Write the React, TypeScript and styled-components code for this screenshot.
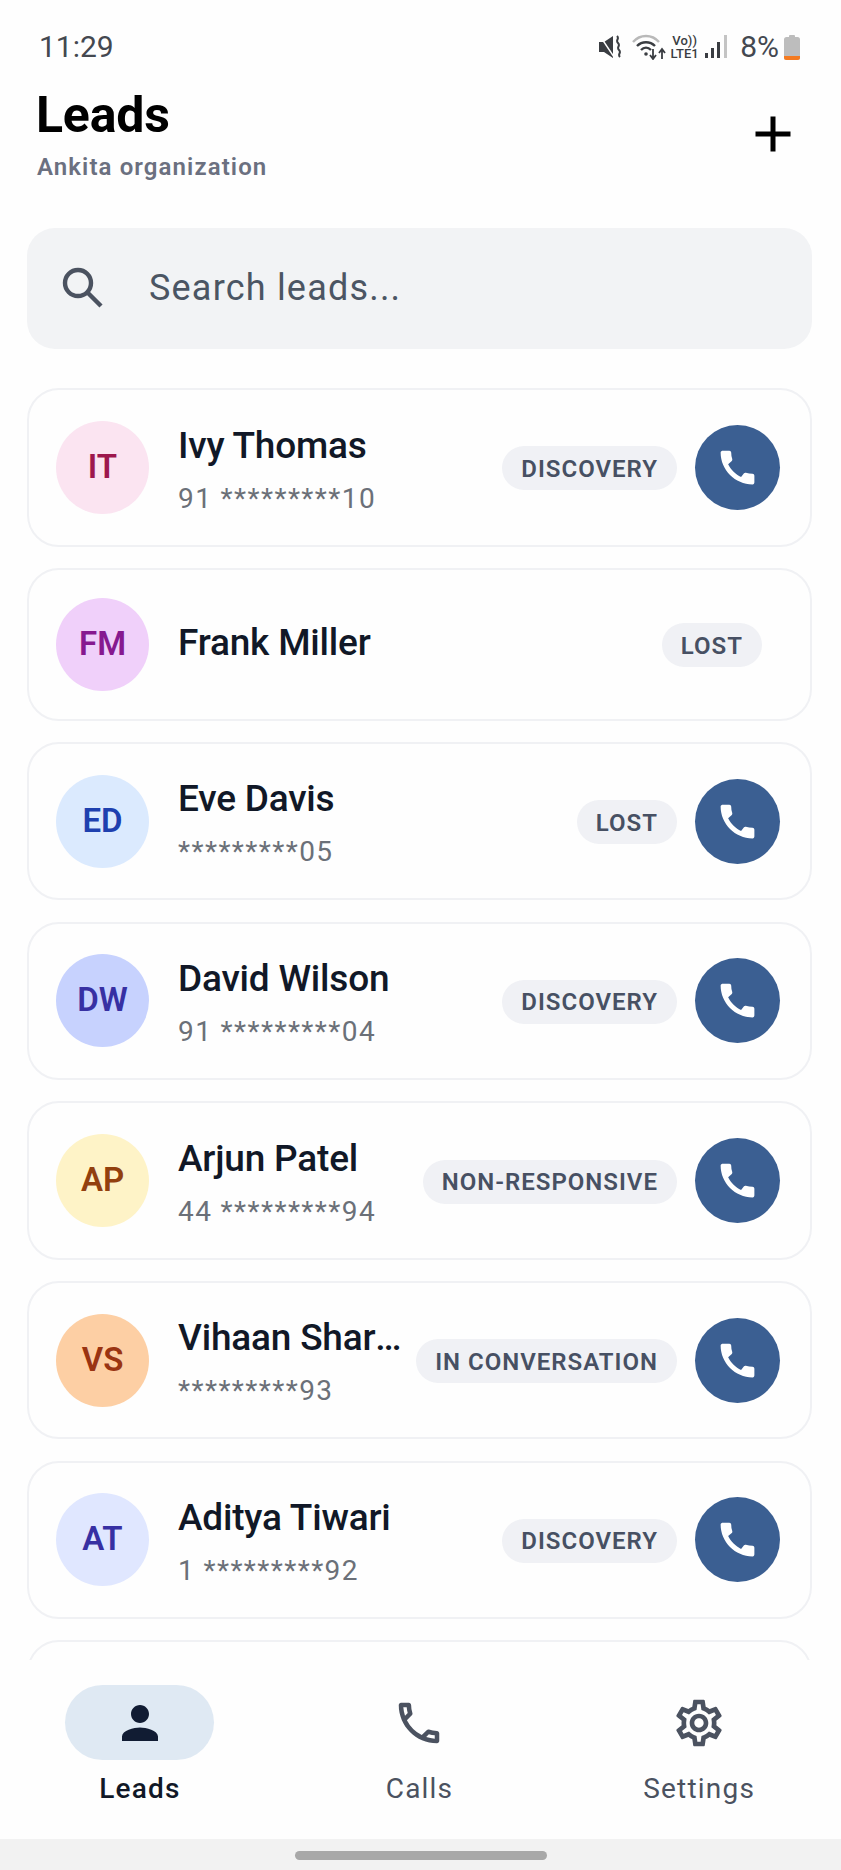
import React from 'react'
import styled, { createGlobalStyle } from 'styled-components'
import { MdAdd, MdCall, MdPerson, MdOutlineCall, MdOutlineSettings } from 'react-icons/md'

const GlobalStyle = createGlobalStyle`
    html, body {
        margin: 0;
        padding: 0;
        background: #fefefe;
        font-family: Roboto, "Liberation Sans", sans-serif;
    }
    * {
        box-sizing: border-box;
    }
`

const Page = styled.div`
    width: 841px;
    height: 1870px;
    display: flex;
    flex-direction: column;
    overflow: hidden;
    background: #fefefe;
`

const StatusBar = styled.div`
    height: 80px;
    flex: none;
    padding: 30px 41px 0 39px;
    display: flex;
    justify-content: space-between;
    align-items: flex-start;
    color: #444850;
    font-size: 30px;
    line-height: 34px;
`

const StatusIcons = styled.div`
    display: flex;
    align-items: center;
    height: 34px;
`

const StatusGlyph = styled.svg<{ $left: number }>`
    display: block;
    flex: none;
    margin-left: ${(p) => p.$left}px;
`

const VoLte = styled.div`
    margin-left: 3px;
    width: 31px;
    display: flex;
    flex-direction: column;
    align-items: center;
    font-size: 13px;
    line-height: 13px;
    font-weight: 500;
    color: #3a3d42;
`

const BatteryPercent = styled.span`
    margin-left: 12px;
`

const Header = styled.header`
    flex: none;
    height: 148px;
    padding: 7px 36px 0 36px;
    display: flex;
    justify-content: space-between;
    align-items: flex-start;
`

const Title = styled.h1`
    margin: 0;
    font-size: 50px;
    line-height: 56px;
    font-weight: 700;
    letter-spacing: -0.2px;
    color: #000;
`

const Subtitle = styled.div`
    font-size: 24px;
    line-height: 30px;
    margin-top: 9px;
    margin-left: 1px;
    font-weight: 600;
    letter-spacing: 1.1px;
    color: #6b7080;
`

const AddButton = styled.div`
    margin-top: 17px;
    margin-right: 2px;
    color: #000;
    line-height: 0;
`

const SearchBar = styled.div`
    flex: none;
    height: 121px;
    margin: 0 29px 0 27px;
    padding: 0 0 2px 35px;
    border-radius: 28px;
    background: #f2f3f5;
    display: flex;
    align-items: center;
    color: #4b5563;
    font-size: 36px;
    letter-spacing: 1.2px;
`

const SearchGlyph = styled.svg`
    display: block;
    flex: none;
    margin-right: 46px;
    color: #4b5260;
`

const LeadList = styled.div`
    flex: 1;
    min-height: 0;
    overflow: hidden;
    padding: 39px 29px 0 27px;
    display: flex;
    flex-direction: column;
    gap: 21.2px;
`

const Card = styled.div`
    flex: none;
    padding: 28px 30px 28px 27px;
    border: 2px solid #f0f1f4;
    border-radius: 32px;
    background: #fefefe;
    display: flex;
    align-items: center;
`

const EmptyCard = styled(Card)`
    height: 159px;
`

const Avatar = styled.div<{ $bg: string; $fg: string }>`
    width: 93px;
    height: 93px;
    flex: none;
    border-radius: 50%;
    background: ${(p) => p.$bg};
    color: ${(p) => p.$fg};
    display: flex;
    align-items: center;
    justify-content: center;
    font-size: 33px;
    font-weight: 600;
    padding-bottom: 2px;
`

const LeadText = styled.div`
    flex: 1;
    min-width: 0;
    margin-left: 29px;
    margin-right: 10px;
`

const Name = styled.div<{ $solo?: boolean }>`
    margin: ${(p) => (p.$solo ? '0 0 2px' : '2.5px 0 0')};
    font-size: 37px;
    line-height: 50px;
    font-weight: 500;
    letter-spacing: -0.2px;
    color: #111827;
    white-space: nowrap;
    overflow: hidden;
    text-overflow: ellipsis;
`

const Phone = styled.div`
    margin-top: 9px;
    font-size: 28px;
    line-height: 37px;
    letter-spacing: 1.4px;
    color: #6b7078;
`

const Badge = styled.div<{ $solo?: boolean }>`
    flex: none;
    height: 44px;
    margin-top: 2px;
    padding: 1px 19px 0;
    border-radius: 22px;
    background: #f0f1f5;
    color: #475063;
    display: flex;
    align-items: center;
    font-size: 24px;
    font-weight: 600;
    letter-spacing: 1px;
    margin-right: ${(p) => (p.$solo ? '18px' : '0')};
`

const CallButton = styled.div`
    width: 85px;
    height: 85px;
    flex: none;
    margin-left: 18px;
    border-radius: 50%;
    background: #3b5f92;
    color: #fff;
    display: flex;
    align-items: center;
    justify-content: center;
    line-height: 0;
`

const BottomNav = styled.nav`
    flex: none;
    height: 179px;
    padding: 25px 2px 0 0;
    background: #fefefe;
    display: grid;
    grid-template-columns: repeat(3, 1fr);
`

const NavItem = styled.div<{ $active?: boolean }>`
    display: flex;
    flex-direction: column;
    align-items: center;
    color: ${(p) => (p.$active ? '#111827' : '#4b5260')};
    font-size: 28px;
    line-height: 36px;
    letter-spacing: 1.2px;
    font-weight: ${(p) => (p.$active ? 500 : 400)};
`

const NavIcon = styled.div<{ $active?: boolean }>`
    width: 149px;
    height: 75px;
    border-radius: 38px;
    margin-bottom: 11px;
    background: ${(p) => (p.$active ? '#dfe9f3' : 'transparent')};
    display: flex;
    align-items: center;
    justify-content: center;
    line-height: 0;
`

const SystemBar = styled.div`
    flex: none;
    height: 31px;
    background: #f2f2f2;
    display: flex;
    justify-content: center;
    padding-top: 12px;
`

const HomeHandle = styled.div`
    width: 252px;
    height: 9px;
    border-radius: 5px;
    background: #a8a8a8;
`

type Lead = {
    initials: string
    name: string
    phone?: string
    status: string
    bg: string
    fg: string
}

const leads: Lead[] = [
    { initials: 'IT', name: 'Ivy Thomas', phone: '91 *********10', status: 'DISCOVERY', bg: '#fbe4f1', fg: '#9d174d' },
    { initials: 'FM', name: 'Frank Miller', status: 'LOST', bg: '#f0d0fa', fg: '#86198f' },
    { initials: 'ED', name: 'Eve Davis', phone: '*********05', status: 'LOST', bg: '#dbeafe', fg: '#1e40af' },
    { initials: 'DW', name: 'David Wilson', phone: '91 *********04', status: 'DISCOVERY', bg: '#c7d2fe', fg: '#3730a3' },
    { initials: 'AP', name: 'Arjun Patel', phone: '44 *********94', status: 'NON-RESPONSIVE', bg: '#fef3c7', fg: '#92400e' },
    { initials: 'VS', name: 'Vihaan Sharma', phone: '*********93', status: 'IN CONVERSATION', bg: '#fdcfa4', fg: '#9a3412' },
    { initials: 'AT', name: 'Aditya Tiwari', phone: '1 *********92', status: 'DISCOVERY', bg: '#e0e7ff', fg: '#3730a3' },
]

const MuteIcon = () => (
    <StatusGlyph $left={0} width="22" height="24" viewBox="0 0 22 24" fill="none">
        <path d="M0 7h5l9-6v22l-9-6H0z" fill="#3a3d42" />
        <path d="M1 1l14 21" stroke="#fefefe" strokeWidth="1.4" />
        <path d="M18 1c3 3-2 4 1 7s-2 4 1 7-2 4 1 7" stroke="#3a3d42" strokeWidth="2" />
    </StatusGlyph>
)

const WifiIcon = () => (
    <StatusGlyph $left={11} width="34" height="26" viewBox="0 0 34 26" fill="none">
        <path d="M1 8c7-8 19-8 26 0" stroke="#b9b9b9" strokeWidth="2.4" />
        <path d="M5 12c5-5 13-5 18 0" stroke="#3a3d42" strokeWidth="2.4" />
        <path d="M9 16c3-3 7-3 10 0" stroke="#3a3d42" strokeWidth="2.4" />
        <circle cx="14" cy="20" r="1.8" fill="#3a3d42" />
        <path d="M21 15v9M18 21l3 4 3-4" stroke="#3a3d42" strokeWidth="1.8" />
        <path d="M30 25v-9M27 19l3-4 3 4" stroke="#3a3d42" strokeWidth="1.8" />
    </StatusGlyph>
)

const SignalIcon = () => (
    <StatusGlyph $left={5} width="23" height="24" viewBox="0 0 23 24" fill="none">
        <rect x="0" y="18" width="3" height="5" fill="#3a3d42" />
        <rect x="6" y="13" width="3" height="10" fill="#3a3d42" />
        <rect x="12" y="7" width="3" height="16" fill="#3a3d42" />
        <rect x="19" y="0" width="3" height="23" fill="#c4c4c4" />
    </StatusGlyph>
)

const BatteryIcon = () => (
    <StatusGlyph $left={5} width="16" height="25" viewBox="0 0 16 25" fill="none">
        <rect x="5" y="0" width="6" height="3" rx="1" fill="#bdbdbd" />
        <rect x="0" y="2" width="16" height="23" rx="2.5" fill="#bdbdbd" />
        <path d="M0 21h16v1.5a2.5 2.5 0 0 1-2.5 2.5h-11A2.5 2.5 0 0 1 0 22.5z" fill="#f47a20" />
    </StatusGlyph>
)

const SearchIcon = () => (
    <SearchGlyph width="41" height="41" viewBox="0 0 41 41" fill="none" stroke="currentColor">
        <circle cx="16" cy="16" r="13" strokeWidth="4.4" />
        <path d="M25.5 25.5L39 39" strokeWidth="4.4" />
    </SearchGlyph>
)

const LeadCard: React.FunctionComponent<{ lead: Lead }> = ({ lead }) => (
    <Card>
        <Avatar $bg={lead.bg} $fg={lead.fg}>{lead.initials}</Avatar>
        <LeadText>
            <Name $solo={!lead.phone}>{lead.name}</Name>
            {lead.phone && <Phone>{lead.phone}</Phone>}
        </LeadText>
        <Badge $solo={!lead.phone}>{lead.status}</Badge>
        {lead.phone && (
            <CallButton>
                <MdCall size={45} />
            </CallButton>
        )}
    </Card>
)

export default function App() {
    return (
        <Page>
            <GlobalStyle />
            <StatusBar>
                <span>11:29</span>
                <StatusIcons>
                    <MuteIcon />
                    <WifiIcon />
                    <VoLte>
                        <span>Vo))</span>
                        <span>LTE1</span>
                    </VoLte>
                    <SignalIcon />
                    <BatteryPercent>8%</BatteryPercent>
                    <BatteryIcon />
                </StatusIcons>
            </StatusBar>
            <Header>
                <div>
                    <Title>Leads</Title>
                    <Subtitle>Ankita organization</Subtitle>
                </div>
                <AddButton>
                    <MdAdd size={60} />
                </AddButton>
            </Header>
            <SearchBar>
                <SearchIcon />
                Search leads...
            </SearchBar>
            <LeadList>
                {leads.map((lead) => (
                    <LeadCard key={lead.initials} lead={lead} />
                ))}
                <EmptyCard />
            </LeadList>
            <BottomNav>
                <NavItem $active>
                    <NavIcon $active>
                        <MdPerson size={54} color="#111c33" />
                    </NavIcon>
                    Leads
                </NavItem>
                <NavItem>
                    <NavIcon>
                        <MdOutlineCall size={54} />
                    </NavIcon>
                    Calls
                </NavItem>
                <NavItem>
                    <NavIcon>
                        <MdOutlineSettings size={56} />
                    </NavIcon>
                    Settings
                </NavItem>
            </BottomNav>
            <SystemBar>
                <HomeHandle />
            </SystemBar>
        </Page>
    )
}
